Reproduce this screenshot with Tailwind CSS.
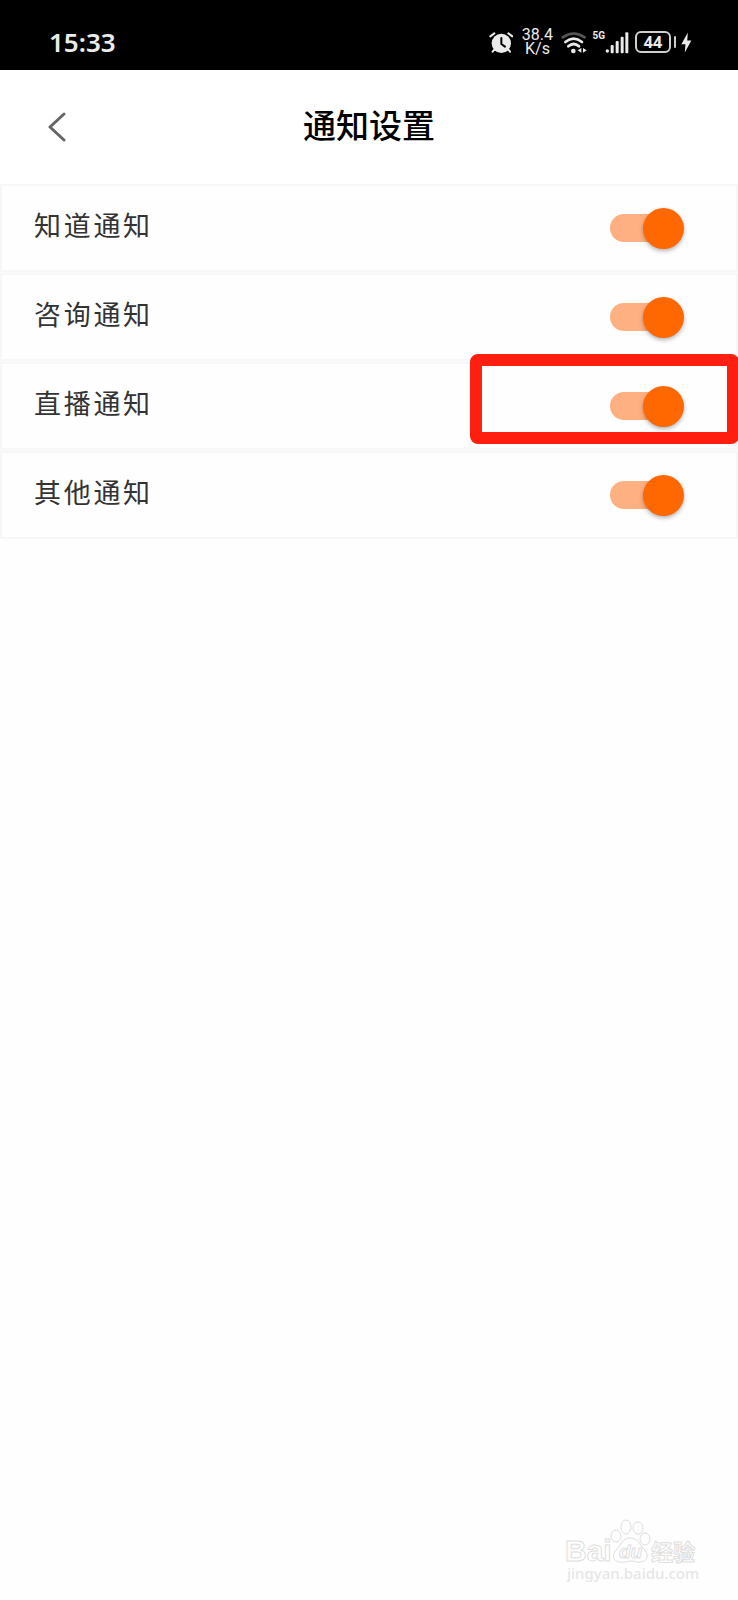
<!DOCTYPE html>
<html lang="zh-CN">
<head>
<meta charset="utf-8">
<meta name="viewport" content="width=device-width, initial-scale=1">
<title>通知设置</title>
<script src="https://cdn.jsdelivr.net/npm/@tailwindcss/browser@4"></script>
</head>
<body class="flex min-h-screen flex-col overflow-x-hidden bg-[#fefefe] font-['Roboto','Noto_Sans_CJK_SC',sans-serif]">
  <div class="flex h-[70px] items-center justify-between bg-black pt-3.5 pr-[46px] pl-[49px] text-[#ebebeb]">
    <time class="font-['Noto_Sans','Noto_Sans_CJK_SC',sans-serif] text-[26px] leading-8 font-semibold">15:33</time>
    <div class="flex items-center">
      <svg class="h-[22px] w-6" viewBox="54 60 72 66" fill="none" stroke="#ebebeb" aria-hidden="true">
        <circle cx="91" cy="97" r="29" fill="#ebebeb" stroke="none"/>
        <path d="M58 76 L70 67 M124 76 L112 67" stroke-width="6" stroke-linecap="round"/>
        <path d="M70 116 L65 122 M112 116 L117 122" stroke-width="6" stroke-linecap="round"/>
        <path d="M91 81 V99 L102 107" stroke="#000" stroke-width="6" stroke-linecap="round" stroke-linejoin="round"/>
      </svg>
      <div class="ml-2 w-8 text-center text-base leading-[14px]">38.4<br>K/s</div>
      <svg class="ml-2 h-[23px] w-[27px]" viewBox="273 60 81 69" fill="none" stroke="#ebebeb" stroke-linecap="round" aria-hidden="true">
        <path d="M278 79 Q311 56 344 79" stroke="#555" stroke-width="8"/>
        <path d="M286 93 Q311 73 336 93" stroke-width="8"/>
        <path d="M295 106 Q311 92 327 106" stroke-width="8"/>
        <circle cx="310" cy="120" r="7" fill="#ebebeb" stroke="none"/>
        <path d="M334 111 V125 L323 118 Z M339 111 V125 L350 118 Z" fill="#ebebeb" stroke="none"/>
      </svg>
      <span class="mb-3 ml-1 text-[10px] leading-3 font-bold">5G</span>
      <svg class="h-[23px] w-6" viewBox="399 60 72 69" fill="#ebebeb" aria-hidden="true">
        <circle cx="406" cy="120" r="5"/>
        <rect x="416" y="102" width="9" height="25" rx="3"/>
        <rect x="431" y="90" width="9" height="37" rx="3"/>
        <rect x="446" y="77" width="9" height="50" rx="3"/>
        <rect x="460" y="64" width="9" height="63" rx="3"/>
      </svg>
      <div class="ml-1.5 flex h-[22px] w-9 items-center justify-center rounded-md border-2 border-[#cfcfcf] font-['Noto_Sans',sans-serif] text-base leading-4 font-bold">44</div>
      <div class="ml-[3px] h-3 w-0.5 rounded-sm bg-[#cfcfcf]"></div>
      <svg class="ml-[5px] h-[21px] w-[11px]" viewBox="634 66 32 60" fill="#ebebeb" aria-hidden="true"><path d="M654 67 L635 101 H647 L645 125 L664 90 H652 Z"/></svg>
    </div>
  </div>

  <header class="grid h-[114px] grid-cols-[1fr_auto_1fr] items-center bg-white px-10">
    <button type="button" aria-label="返回" class="flex size-10 items-center pl-2">
      <svg class="h-[30px] w-[18px]" viewBox="0 0 18 30" fill="none" stroke="#666" stroke-width="3" stroke-linecap="round" stroke-linejoin="round" aria-hidden="true"><path d="M16 2 L2 15 L16 28"/></svg>
    </button>
    <h1 class="text-[33px] leading-10 font-medium text-black">通知设置</h1>
  </header>

  <main class="flex flex-col gap-px bg-[#fbfbfb]">
    <label class="flex h-[88px] items-center justify-between border-2 border-[#f7f7f7] bg-[#fefefe] pr-[52px] pl-8 text-[27px] text-[#333]">
      <span class="pb-0.5 tracking-widest">知道通知</span>
      <input type="checkbox" role="switch" checked class="relative h-[41px] w-[74px] appearance-none before:absolute before:top-1.5 before:left-0 before:h-7 before:w-16 before:rounded-full before:bg-[#ffb082] after:absolute after:top-0 after:right-0 after:size-[41px] after:rounded-full after:bg-[#ff6700] after:shadow-[0_2px_4px_rgba(0,0,0,0.3)]">
    </label>
    <label class="flex h-[88px] items-center justify-between border-2 border-[#f7f7f7] bg-[#fefefe] pr-[52px] pl-8 text-[27px] text-[#333]">
      <span class="pb-0.5 tracking-widest">咨询通知</span>
      <input type="checkbox" role="switch" checked class="relative h-[41px] w-[74px] appearance-none before:absolute before:top-1.5 before:left-0 before:h-7 before:w-16 before:rounded-full before:bg-[#ffb082] after:absolute after:top-0 after:right-0 after:size-[41px] after:rounded-full after:bg-[#ff6700] after:shadow-[0_2px_4px_rgba(0,0,0,0.3)]">
    </label>
    <label class="relative flex h-[88px] items-center justify-between border-2 border-[#f7f7f7] bg-[#fefefe] pr-[52px] pl-8 text-[27px] text-[#333]">
      <span class="pb-0.5 tracking-widest">直播通知</span>
      <input type="checkbox" role="switch" checked class="relative h-[41px] w-[74px] appearance-none before:absolute before:top-1.5 before:left-0 before:h-7 before:w-16 before:rounded-full before:bg-[#ffb082] after:absolute after:top-0 after:right-0 after:size-[41px] after:rounded-full after:bg-[#ff6700] after:shadow-[0_2px_4px_rgba(0,0,0,0.3)]">
      <span class="pointer-events-none absolute -top-2.5 -right-[3px] h-[90px] w-[269px] rounded-lg border-12 border-[#ff1f10]"></span>
    </label>
    <label class="flex h-[88px] items-center justify-between border-2 border-[#f7f7f7] bg-[#fefefe] pr-[52px] pl-8 text-[27px] text-[#333]">
      <span class="pb-0.5 tracking-widest">其他通知</span>
      <input type="checkbox" role="switch" checked class="relative h-[41px] w-[74px] appearance-none before:absolute before:top-1.5 before:left-0 before:h-7 before:w-16 before:rounded-full before:bg-[#ffb082] after:absolute after:top-0 after:right-0 after:size-[41px] after:rounded-full after:bg-[#ff6700] after:shadow-[0_2px_4px_rgba(0,0,0,0.3)]">
    </label>
  </main>

  <footer class="mt-auto flex justify-end">
    <svg class="h-[100px] w-[188px]" viewBox="0 0 188 100" fill="#fefefe" stroke="#dedede" stroke-width="1" role="img" aria-label="Baidu 经验">
      <text x="15" y="61" class="font-['Liberation_Sans',sans-serif] text-[30px] font-bold">Bai</text>
      <ellipse cx="66" cy="36" rx="5" ry="6"/>
      <ellipse cx="76" cy="27" rx="5" ry="7"/>
      <ellipse cx="88" cy="28" rx="5" ry="6"/>
      <ellipse cx="95" cy="39" rx="5" ry="6"/>
      <path d="M80 38 C72 38 72 44 67 49 C61 54 63 62 70 62 C75 63 77 61 81 61 C85 61 87 63 91 62 C98 61 99 54 94 49 C89 44 88 38 80 38 Z"/>
      <text x="69" y="58" class="font-['Liberation_Sans',sans-serif] text-[19px] font-bold italic">du</text>
      <text x="101" y="60" class="font-['Noto_Sans_CJK_SC',sans-serif] text-[22px] font-bold">经验</text>
      <text x="17" y="79" fill="#e6e6e6" stroke="none" class="font-['Noto_Sans',sans-serif] text-[15px] font-medium">jingyan.baidu.com</text>
    </svg>
  </footer>
</body>
</html>
